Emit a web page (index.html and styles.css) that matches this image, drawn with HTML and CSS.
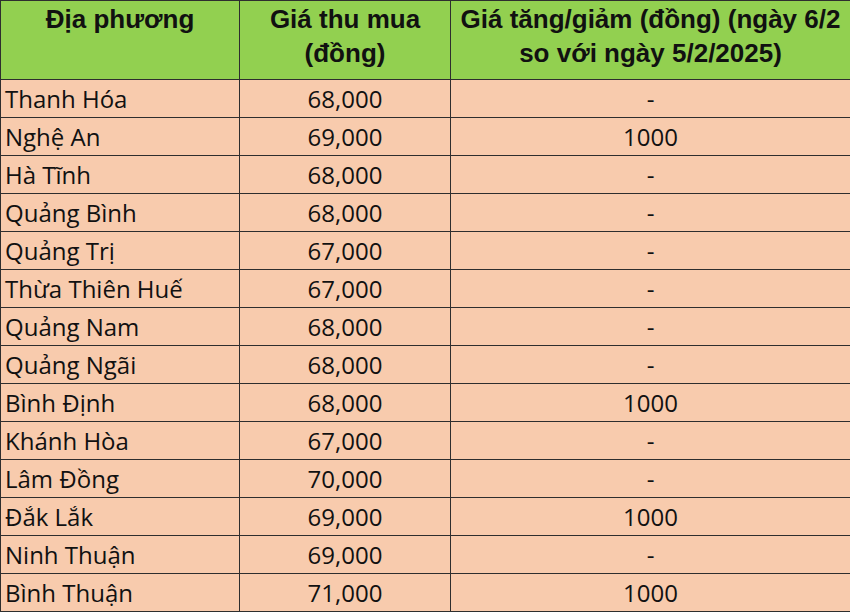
FILE: index.html
```html
<!DOCTYPE html>
<html lang="vi">
<head>
<meta charset="utf-8">
<link rel="stylesheet" href="styles.css">
</head>
<body>
<table class="price-table">
  <colgroup>
    <col class="c1"><col class="c2"><col class="c3">
  </colgroup>
  <thead>
    <tr>
      <th class="left-head">Địa phương</th>
      <th>Giá thu mua<br>(đồng)</th>
      <th>Giá tăng/giảm (đồng) (ngày 6/2<br>so với ngày 5/2/2025)</th>
    </tr>
  </thead>
  <tbody>
    <tr><td class="name">Thanh Hóa</td><td>68,000</td><td>-</td></tr>
    <tr><td class="name">Nghệ An</td><td>69,000</td><td>1000</td></tr>
    <tr><td class="name">Hà Tĩnh</td><td>68,000</td><td>-</td></tr>
    <tr><td class="name">Quảng Bình</td><td>68,000</td><td>-</td></tr>
    <tr><td class="name">Quảng Trị</td><td>67,000</td><td>-</td></tr>
    <tr><td class="name">Thừa Thiên Huế</td><td>67,000</td><td>-</td></tr>
    <tr><td class="name">Quảng Nam</td><td>68,000</td><td>-</td></tr>
    <tr><td class="name">Quảng Ngãi</td><td>68,000</td><td>-</td></tr>
    <tr><td class="name">Bình Định</td><td>68,000</td><td>1000</td></tr>
    <tr><td class="name">Khánh Hòa</td><td>67,000</td><td>-</td></tr>
    <tr><td class="name">Lâm Đồng</td><td>70,000</td><td>-</td></tr>
    <tr><td class="name">Đắk Lắk</td><td>69,000</td><td>1000</td></tr>
    <tr><td class="name">Ninh Thuận</td><td>69,000</td><td>-</td></tr>
    <tr><td class="name">Bình Thuận</td><td>71,000</td><td>1000</td></tr>
  </tbody>
</table>
</body>
</html>
```

FILE: styles.css
```css
html, body {
  margin: 0;
  padding: 0;
  background: #ffffff;
}
.price-table {
  border-collapse: collapse;
  width: 850px;
  table-layout: fixed;
  color: #111;
}
.c1 { width: 239px; }
.c2 { width: 211px; }
.c3 { width: 400px; }
.price-table th,
.price-table td {
  border: 1.5px solid #2e2e2e;
  padding: 0;
}
.price-table thead th {
  background: #92d050;
  font-family: "Liberation Sans", Arial, sans-serif;
  font-weight: bold;
  font-size: 26px;
  line-height: 34px;
  height: 77px;
  vertical-align: top;
  text-align: center;
  padding-top: 1px;
}
.price-table tbody td {
  background: #f8cbad;
  font-family: "Open Sans", "Noto Sans", sans-serif;
  font-size: 24px;
  height: 37px;
  line-height: 37px;
  text-align: center;
  vertical-align: middle;
}
.price-table tbody td.name {
  text-align: left;
  padding-left: 4px;
}
```
